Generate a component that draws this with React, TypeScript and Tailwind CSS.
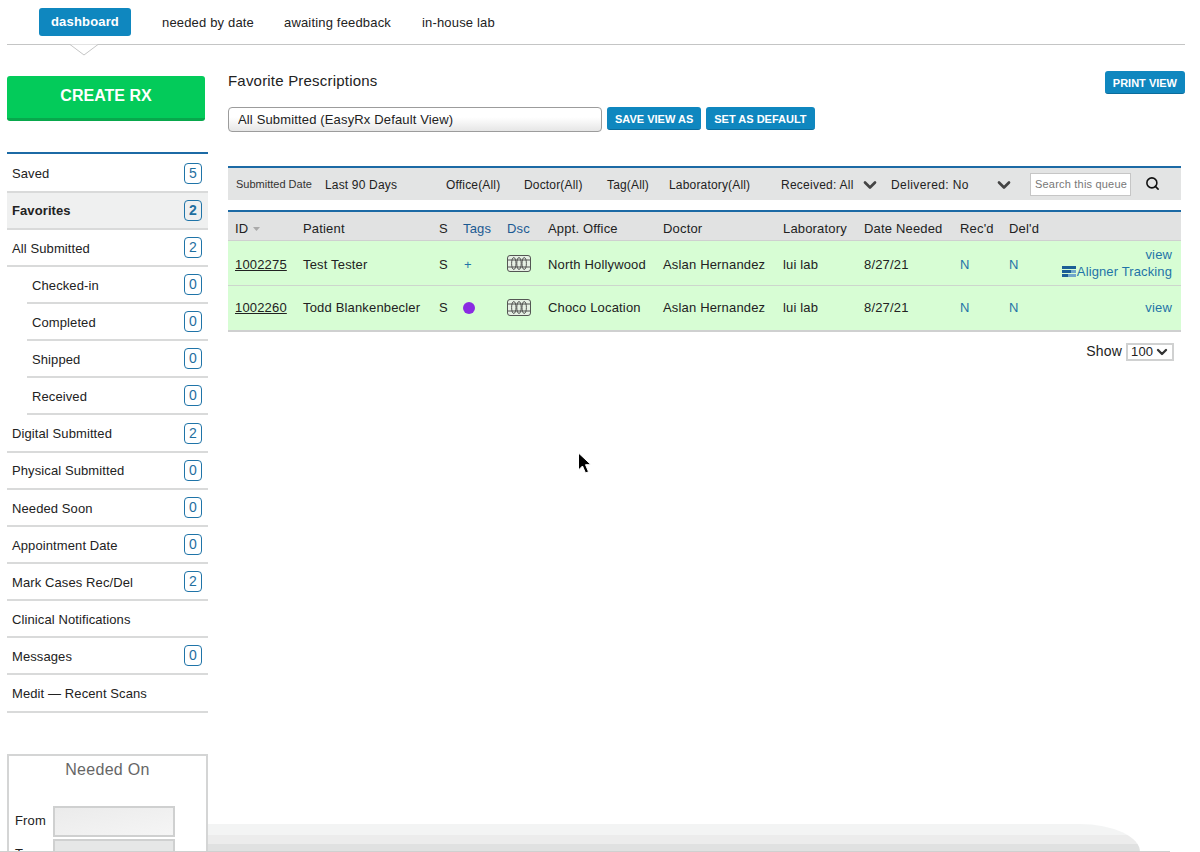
import React from "react";
import { ChevronDown, Search } from "lucide-react";

type NavItem = { label: string; count?: number; sub?: boolean; active?: boolean };

const navItems: NavItem[] = [
  { label: "Saved", count: 5 },
  { label: "Favorites", count: 2, active: true },
  { label: "All Submitted", count: 2 },
  { label: "Checked-in", count: 0, sub: true },
  { label: "Completed", count: 0, sub: true },
  { label: "Shipped", count: 0, sub: true },
  { label: "Received", count: 0, sub: true },
  { label: "Digital Submitted", count: 2 },
  { label: "Physical Submitted", count: 0 },
  { label: "Needed Soon", count: 0 },
  { label: "Appointment Date", count: 0 },
  { label: "Mark Cases Rec/Del", count: 2 },
  { label: "Clinical Notifications" },
  { label: "Messages", count: 0 },
  { label: "Medit — Recent Scans" },
];

const cols = "grid grid-cols-[68px_136px_24px_44px_41px_115px_120px_81px_96px_49px_40px_1fr] pl-[7px] pr-[9px]";

function DscIcon() {
  return (
    <svg width="24" height="17" viewBox="0 0 24 17" fill="none" stroke="#444" strokeWidth="0.9">
      <rect x="0.5" y="0.5" width="23" height="16" rx="2.5" fill="#e6f0e4" />
      <path d="M1 5h22M1 12h22" />
      <ellipse cx="6.8" cy="8.5" rx="2.2" ry="6" />
      <ellipse cx="12" cy="8.5" rx="2.2" ry="6" />
      <ellipse cx="17.2" cy="8.5" rx="2.2" ry="6" />
    </svg>
  );
}

function TrackingIcon() {
  return (
    <svg width="14" height="11" viewBox="0 0 14 11" className="mr-[1px]">
      <rect x="0" y="0" width="14" height="3" fill="#1b5f96" />
      <rect x="0" y="4" width="14" height="3" fill="#1b5f96" />
      <rect x="9" y="4" width="5" height="3" fill="#6fa6cb" />
      <rect x="0" y="8" width="14" height="3" fill="#1b5f96" />
      <rect x="6" y="8" width="8" height="3" fill="#6fa6cb" />
    </svg>
  );
}

function NavRow({ item }: { item: NavItem }) {
  return (
    <div className={item.sub ? "pl-5" : ""}>
      <div
        className={`h-[37.15px] flex items-center justify-between border-b-2 border-[#d9dada] pl-[5px] pr-[6px] tracking-[0.1px] ${
          item.active ? "bg-[#eff0f0] font-bold" : ""
        }`}
      >
        <span className="pt-[2px]">{item.label}</span>
        {item.count !== undefined && (
          <span className="w-[18px] h-[21px] flex items-center justify-center border border-[#1f74a8] rounded-[4px] text-[14px] text-[#1f6f9f]">
            {item.count}
          </span>
        )}
      </div>
    </div>
  );
}

function BlueButton({ children }: { children: React.ReactNode }) {
  return (
    <button className="h-[23px] px-2 pt-[3px] rounded-[3px] bg-[#0f87bf] border-b border-[#0b6c9c] text-white text-[11px] font-bold tracking-normal">
      {children}
    </button>
  );
}

export default function App() {
  return (
    <div
      className="relative h-[852px] overflow-hidden bg-white text-[13px] text-[#222] tracking-[0.17px]"
      style={{ fontFamily: '"Liberation Sans", Arial, sans-serif' }}
    >
      <div className="relative ml-[7px] mr-[15px] h-[45px] border-b border-[#c4c5c5] flex items-start pl-8 pt-2">
        <a className="w-[92px] h-7 flex items-center justify-center rounded-[3px] bg-[#0f87bf] text-white font-bold">
          dashboard
        </a>
        <a className="ml-[31px] leading-[30px]">needed by date</a>
        <a className="ml-[30px] leading-[30px]">awaiting feedback</a>
        <a className="ml-[31px] leading-[30px]">in-house lab</a>
        <svg width="32" height="12" viewBox="0 0 32 12" className="absolute left-[61px] top-[44px]" fill="#fff" stroke="#c4c5c5">
          <path d="M0 0.5h2L16 11 30 0.5h2" />
        </svg>
      </div>

      <div className="flex pl-[7px] pr-[19px]">
        <aside className="w-[201px] shrink-0 pt-[31px]">
          <button className="w-[198px] h-[45px] pb-[2px] rounded-[3px] bg-[#03cb5a] border-b-[3px] border-[#08a84c] text-white text-[16px] font-bold tracking-normal">
            CREATE RX
          </button>
          <div className="mt-[31px] pt-[1.5px] border-t-2 border-[#1c6aa5]">
            {navItems.map((item) => (
              <NavRow key={item.label} item={item} />
            ))}
          </div>
          <div className="mt-[41px] h-[150px] border-2 border-[#d4d5d5] px-[6px] pt-[2px]">
            <div className="text-center text-[16px] text-[#666] tracking-[0.3px]">Needed On</div>
            <div className="mt-[24px] flex flex-col gap-[2px]">
              <div className="flex items-center gap-[9px]">
                <span className="w-[29px]">From</span>
                <div className="w-[122px] h-[31px] border-2 border-[#cfd0d0] bg-linear-to-br from-[#ebebeb] to-[#f5f5f5]" />
              </div>
              <div className="flex items-center gap-[9px]">
                <span className="w-[29px]">To</span>
                <div className="w-[122px] h-[31px] border-2 border-[#cfd0d0] bg-[#e6e7e7]" />
              </div>
            </div>
          </div>
        </aside>

        <main className="flex-1 ml-5 pt-[26px] min-w-0">
          <div className="flex justify-between">
            <div>
              <h1 className="text-[15px] leading-[20px] font-normal tracking-[0.2px]">Favorite Prescriptions</h1>
              <div className="mt-[16px] flex items-start gap-[5px]">
                <select className="appearance-none w-[374px] h-[25px] border border-[#9c9c9c] rounded-[4px] pl-[9px] bg-linear-to-b from-white from-40% to-[#e6e6e6] text-[13px] tracking-[0.15px]">
                  <option>All Submitted (EasyRx Default View)</option>
                </select>
                <BlueButton>SAVE VIEW AS</BlueButton>
                <BlueButton>SET AS DEFAULT</BlueButton>
              </div>
            </div>
            <div className="-mr-[4px]">
              <BlueButton>PRINT VIEW</BlueButton>
            </div>
          </div>

          <div className="mt-[34px] h-[34px] flex items-center bg-[#e3e4e4] border-t-2 border-[#1c6aa5] pl-2 pt-[2px] text-[12px]">
            <span className="w-[89px] text-[11px] text-[#333] tracking-normal -mt-[2px]">Submitted Date</span>
            <span className="w-[121px]">Last 90 Days</span>
            <span className="w-[78px]">Office(All)</span>
            <span className="w-[83px]">Doctor(All)</span>
            <span className="w-[62px]">Tag(All)</span>
            <span className="w-[112px]">Laboratory(All)</span>
            <span className="w-[110px] flex items-center justify-between pr-[11px]">
              <span className="tracking-[0.25px]">Received: All</span>
              <ChevronDown size={20} strokeWidth={3.2} className="text-[#444]" />
            </span>
            <span className="w-[139px] flex items-center justify-between pr-[16px]">
              <span className="tracking-[0.4px]">Delivered: No</span>
              <ChevronDown size={20} strokeWidth={3.2} className="text-[#444]" />
            </span>
            <div className="w-[101px] h-[23px] -mt-[2px] border border-[#c6c6c6] bg-white pl-1 text-[11px] leading-[20px] text-[#777] tracking-[0.2px]">
              Search this queue
            </div>
            <Search size={15} strokeWidth={2.5} className="ml-[14px] -mt-[3px] text-[#111]" />
          </div>

          <div className="mt-[10px] border-t-2 border-[#1c6aa5]">
            <div className={`${cols} h-[29px] pt-[5px] items-center bg-[#e1e2e2] border-b border-[#cfd0d0]`}>
              <span className="flex items-center gap-[5px]">
                ID
                <svg width="7" height="4" viewBox="0 0 7 4" fill="#aaa">
                  <path d="M0 0h7L3.5 4z" />
                </svg>
              </span>
              <span>Patient</span>
              <span>S</span>
              <span className="text-[#1b5a92]">Tags</span>
              <span className="text-[#1b5a92]">Dsc</span>
              <span>Appt. Office</span>
              <span>Doctor</span>
              <span>Laboratory</span>
              <span>Date Needed</span>
              <span>Rec'd</span>
              <span>Del'd</span>
              <span />
            </div>

            <div className={`${cols} h-[45px] pt-[3px] items-center bg-[#d7fdd4] border-b border-[#cdd6cd]`}>
              <span className="underline">1002275</span>
              <span>Test Tester</span>
              <span>S</span>
              <span className="text-[#1f74a8] pl-[1px]">+</span>
              <span className="-mt-[3px]"><DscIcon /></span>
              <span>North Hollywood</span>
              <span>Aslan Hernandez</span>
              <span>lui lab</span>
              <span>8/27/21</span>
              <span className="text-[#1f74a8]">N</span>
              <span className="text-[#1f74a8]">N</span>
              <div className="flex flex-col items-end -mt-[4px] leading-[17px] text-[#1f74a8] tracking-[0.12px]">
                <span>view</span>
                <span className="flex items-center whitespace-nowrap"><TrackingIcon />Aligner Tracking</span>
              </div>
            </div>

            <div className={`${cols} h-[46px] items-center bg-[#d7fdd4] border-b-2 border-[#cfd0d0]`}>
              <span className="underline">1002260</span>
              <span>Todd Blankenbecler</span>
              <span>S</span>
              <span className="w-3 h-3 rounded-full bg-[#8a2be2]" />
              <span className="-mt-[2px]"><DscIcon /></span>
              <span>Choco Location</span>
              <span>Aslan Hernandez</span>
              <span>lui lab</span>
              <span>8/27/21</span>
              <span className="text-[#1f74a8]">N</span>
              <span className="text-[#1f74a8]">N</span>
              <span className="text-right text-[#1f74a8]">view</span>
            </div>
          </div>

          <div className="mt-[9px] pr-[7px] flex justify-end items-center gap-1 text-[14px]">
            <span>Show</span>
            <div className="w-[48px] h-[18px] border-2 border-[#d0d1d1] flex items-center justify-between pl-[3px] pr-[2px] text-[13px]">
              100
              <ChevronDown size={16} strokeWidth={3.5} className="text-[#333]" />
            </div>
          </div>
        </main>
      </div>

      {/* dock shadow + pointer sit over the page */}
      <div className="absolute left-[208px] bottom-0 w-[932px] h-[28px] rounded-tr-[60px_28px] bg-[linear-gradient(#f3f4f4_0_39%,#ececec_39%_71%,#e0e1e1_71%)]" />
      <div className="absolute left-0 bottom-0 w-[1170px] h-px bg-[#d0d0d0]" />
      <svg width="16" height="24" viewBox="0 0 16 24" className="absolute left-[577px] top-[452px]">
        <path d="M1.5 1v17l4-4 3 7 3-1.300-3-7h5.500z" fill="#000" stroke="#fff" strokeWidth="1" />
      </svg>
    </div>
  );
}
